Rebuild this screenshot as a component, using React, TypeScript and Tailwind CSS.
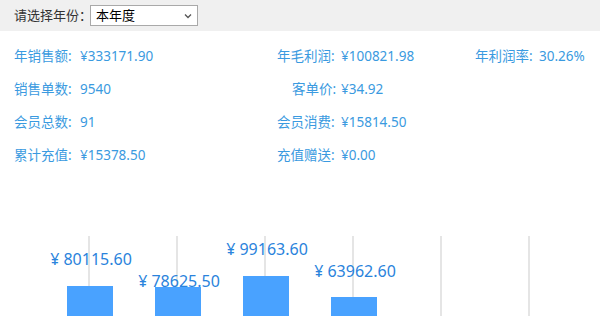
import React from "react";

const font = { fontFamily: '"Noto Sans", "Noto Sans CJK SC", sans-serif' };

type Cell = { label: string; value: string; start: number; valueAt: number };

const colWidths = [200, 260, 140];

const rows: Cell[][] = [
  [
    { label: "年销售额:", value: "¥333171.90", start: 14, valueAt: 80 },
    { label: "年毛利润:", value: "¥100821.98", start: 77, valueAt: 141 },
    { label: "年利润率:", value: "30.26%", start: 15, valueAt: 79 },
  ],
  [
    { label: "销售单数:", value: "9540", start: 14, valueAt: 80 },
    { label: "客单价:", value: "¥34.92", start: 92, valueAt: 141 },
  ],
  [
    { label: "会员总数:", value: "91", start: 14, valueAt: 80 },
    { label: "会员消费:", value: "¥15814.50", start: 77, valueAt: 141 },
  ],
  [
    { label: "累计充值:", value: "¥15378.50", start: 14, valueAt: 80 },
    { label: "充值赠送:", value: "¥0.00", start: 77, valueAt: 141 },
  ],
];

const bars = [
  { x: 90, top: 114, label: "¥ 80115.60", ly: 93 },
  { x: 178, top: 115, label: "¥ 78625.50", ly: 115 },
  { x: 266, top: 104, label: "¥ 99163.60", ly: 83 },
  { x: 354, top: 125, label: "¥ 63962.60", ly: 105 },
];
const grid = [89, 177, 265, 353, 441, 529];

export default function App() {
  return (
    <div className="w-[600px] h-[316px] overflow-hidden bg-white" style={font}>
      <div className="h-[31px] bg-[#f0f0f0] flex items-center pl-[14px] text-[13px] text-[#333]">
        <span className="w-[76px] shrink-0 whitespace-nowrap">请选择年份：</span>
        <div className="w-[108px] h-[21px] shrink-0 bg-white border border-[#a9a9a9] flex items-center justify-between pl-[5px] pr-[5px] text-[13px] text-black">
          <span>本年度</span>
          <svg width="8" height="6" viewBox="0 0 8 6">
            <path d="M1 1.5 L4 4.5 L7 1.5" fill="none" stroke="#555" strokeWidth="1.3" />
          </svg>
        </div>
      </div>
      <div className="pt-[9px] text-[13.5px] text-[#3a9ae0] whitespace-nowrap">
        {rows.map((r, i) => (
          <div key={i} className="h-[33px] flex items-center">
            {r.map((c, j) => (
              <div
                key={j}
                className="flex shrink-0"
                style={{ width: colWidths[j], paddingLeft: c.start }}
              >
                <span className="shrink-0" style={{ width: c.valueAt - c.start }}>
                  {c.label}
                </span>
                <span className="shrink-0">{c.value}</span>
              </div>
            ))}
          </div>
        ))}
      </div>
      <svg width="600" height="144" viewBox="0 0 600 144" className="block">
        {grid.map((g) => (
          <line key={g} x1={g} y1={64} x2={g} y2={144} stroke="#dcdcdc" strokeWidth="1.5" />
        ))}
        {bars.map((b) => (
          <rect key={b.x} x={b.x - 23} y={b.top} width={46} height={144 - b.top} fill="#49a2ff" />
        ))}
        {bars.map((b) => (
          <text
            key={b.label}
            x={b.x + 1}
            y={b.ly}
            textAnchor="middle"
            fontSize="16"
            fill="#2a83dc"
            style={font}
          >
            {b.label}
          </text>
        ))}
      </svg>
    </div>
  );
}
